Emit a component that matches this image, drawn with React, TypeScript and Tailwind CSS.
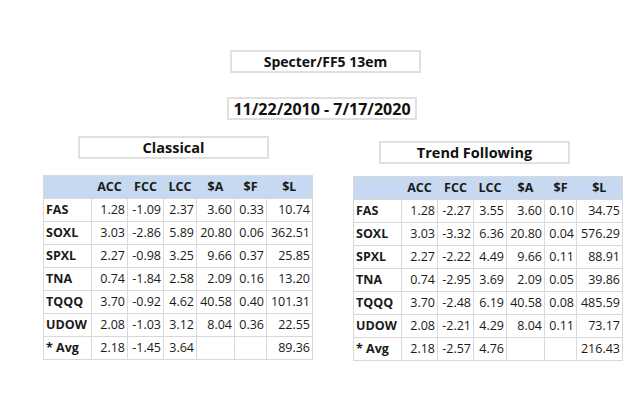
const cols = ["ACC", "FCC", "LCC", "$A", "$F", "$L"];
const widths = ["w-[48px]", "w-[36px]", "w-[36px]", "w-[33px]", "w-[38px]", "w-[32px]", "w-[46px]"];

type Row = [string, string, string, string, string, string, string];

const classical: Row[] = [
  ["FAS", "1.28", "-1.09", "2.37", "3.60", "0.33", "10.74"],
  ["SOXL", "3.03", "-2.86", "5.89", "20.80", "0.06", "362.51"],
  ["SPXL", "2.27", "-0.98", "3.25", "9.66", "0.37", "25.85"],
  ["TNA", "0.74", "-1.84", "2.58", "2.09", "0.16", "13.20"],
  ["TQQQ", "3.70", "-0.92", "4.62", "40.58", "0.40", "101.31"],
  ["UDOW", "2.08", "-1.03", "3.12", "8.04", "0.36", "22.55"],
  ["* Avg", "2.18", "-1.45", "3.64", "", "", "89.36"],
];

const trend: Row[] = [
  ["FAS", "1.28", "-2.27", "3.55", "3.60", "0.10", "34.75"],
  ["SOXL", "3.03", "-3.32", "6.36", "20.80", "0.04", "576.29"],
  ["SPXL", "2.27", "-2.22", "4.49", "9.66", "0.11", "88.91"],
  ["TNA", "0.74", "-2.95", "3.69", "2.09", "0.05", "39.86"],
  ["TQQQ", "3.70", "-2.48", "6.19", "40.58", "0.08", "485.59"],
  ["UDOW", "2.08", "-2.21", "4.29", "8.04", "0.11", "73.17"],
  ["* Avg", "2.18", "-2.57", "4.76", "", "", "216.43"],
];

const StatTable = ({ rows }: { rows: Row[] }) => (
  <table className="border-collapse border border-[#d9d9d9] text-[12.5px] text-[#1a1a1a] table-fixed">
    <thead>
      <tr className="bg-[#c6d9f1] h-[23px]">
        <th className={widths[0]}></th>
        {cols.map((c, i) => (
          <th key={c} className={`${widths[i + 1]} font-bold text-center p-0`}>
            {c}
          </th>
        ))}
      </tr>
    </thead>
    <tbody>
      {rows.map((r) => (
        <tr key={r[0]} className="h-[23px]">
          {r.map((v, i) => (
            <td
              key={i}
              className={`border border-[#d9d9d9] p-0 leading-none whitespace-nowrap ${
                i === 0 ? "font-bold text-left pl-[2px]" : "text-right pr-[2px]"
              }`}>
              {v}
            </td>
          ))}
        </tr>
      ))}
    </tbody>
  </table>
);

const Caption = ({ text, className }: { text: string; className: string }) => (
  <div
    className={`border-2 border-[#e0e0e0] flex items-center justify-center font-bold text-[#111] ${className}`}>
    {text}
  </div>
);

export default function App() {
  return (
    <div
      className="w-[640px] h-[393px] bg-white overflow-hidden"
      style={{ fontFamily: '"Open Sans", "DejaVu Sans", sans-serif' }}>
      <div className="flex flex-col pt-[50px]">
        <Caption text="Specter/FF5 13em" className="ml-[230px] w-[191px] h-[23px] text-[14px]" />
        <Caption
          text="11/22/2010 - 7/17/2020"
          className="ml-[227px] mt-[24px] w-[190px] h-[23px] text-[16px]"
        />
        <div className="flex mt-[16px]">
          <div className="flex flex-col ml-[43px]">
            <Caption text="Classical" className="ml-[35px] w-[191px] h-[23px] text-[14.5px]" />
            <div className="mt-[16px]">
              <StatTable rows={classical} />
            </div>
          </div>
          <div className="flex flex-col ml-[40px] mt-[5px]">
            <Caption text="Trend Following" className="ml-[26px] w-[191px] h-[23px] text-[14.5px]" />
            <div className="mt-[12px]">
              <StatTable rows={trend} />
            </div>
          </div>
        </div>
      </div>
    </div>
  );
}
